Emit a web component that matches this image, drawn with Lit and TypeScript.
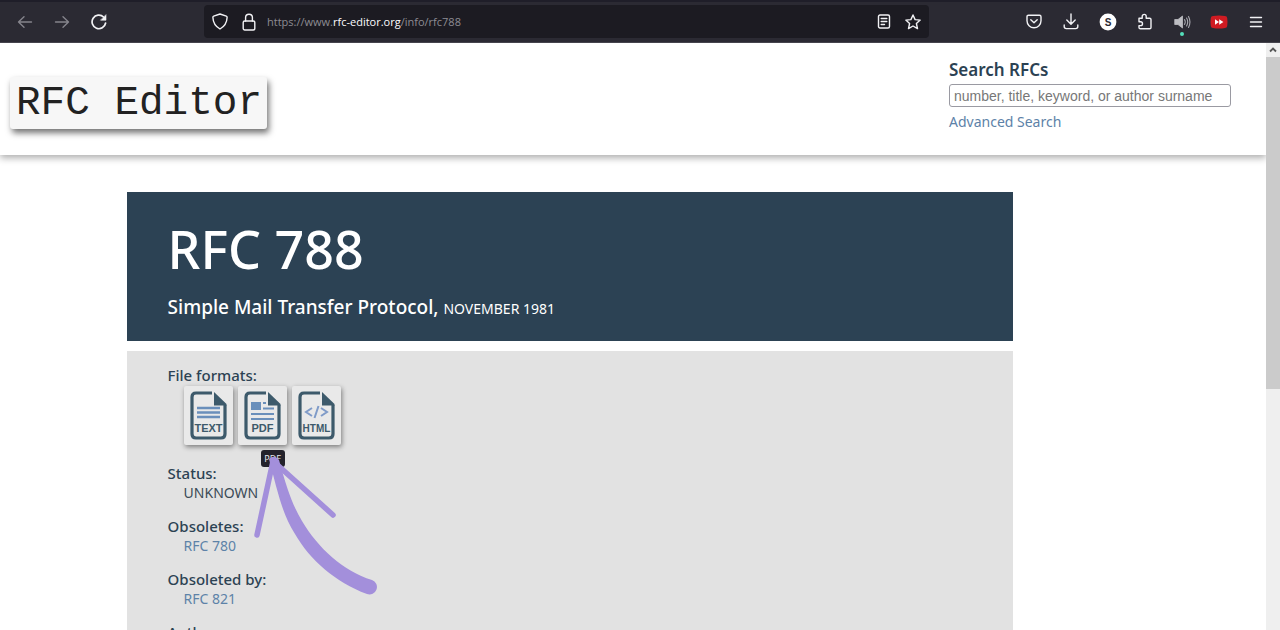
import { LitElement, html, svg, css } from "lit";
import { customElement } from "lit/decorators.js";

@customElement("browser-toolbar")
class BrowserToolbar extends LitElement {
  static styles = css`
    :host {
      display: block;
      font-family: "Open Sans", "Noto Sans", sans-serif;
    }
    .bar {
      display: flex;
      align-items: center;
      height: 43px;
      box-sizing: border-box;
      padding: 3px 12px 4px 13px;
      background: #2b2a33;
      border-top: 2px solid #1f1e29;
      border-bottom: 1px solid #45444d;
    }
    button {
      border: 0;
      background: none;
      padding: 0;
      width: 24px;
      height: 24px;
      color: #f2f2f5;
      position: relative;
    }
    svg {
      display: block;
      margin: 0 auto;
      fill: none;
      stroke: currentColor;
      stroke-width: 1.4;
      stroke-linecap: round;
      stroke-linejoin: round;
    }
    .nav {
      display: flex;
      gap: 13px;
      flex: 0 0 191px;
    }
    .dim {
      color: #85848c;
    }
    .url {
      flex: 0 1 725px;
      min-width: 0;
      height: 33px;
      box-sizing: border-box;
      display: flex;
      align-items: center;
      gap: 5px;
      padding: 0 4px;
      border-radius: 4px;
      background: #1c1b22;
    }
    .address {
      flex: 1;
      padding-left: 1px;
      font-size: 11px;
      line-height: 16px;
      color: #8d8c93;
      white-space: nowrap;
      overflow: hidden;
    }
    .address b {
      font-weight: 400;
      color: #fbfbfe;
    }
    .tools {
      flex: 1;
      display: flex;
      justify-content: flex-end;
      gap: 13px;
    }
    .dot {
      position: absolute;
      left: 10px;
      top: 22px;
      width: 4px;
      height: 4px;
      border-radius: 50%;
      background: #54dfbb;
    }
  `;

  render() {
    return html`
      <nav class="bar" aria-label="Browser">
        <div class="nav">
          <button class="dim" aria-label="Back">
            <svg width="16" height="16" viewBox="0 0 16 16"><path d="M14.5 8H1.5M7 2.8L1.5 8L7 13.2" /></svg>
          </button>
          <button class="dim" aria-label="Forward">
            <svg width="16" height="16" viewBox="0 0 16 16"><path d="M1.5 8H14.5M9 2.8L14.5 8L9 13.2" /></svg>
          </button>
          <button aria-label="Reload">
            <svg width="16" height="16" viewBox="0 0 16 16">
              <path d="M14.6 9A6.8 6.8 0 1 1 12.6 3" stroke-width="1.7" />
              <path d="M15 1V6.2H9.8Z" fill="currentColor" stroke-width="0.6" />
            </svg>
          </button>
        </div>
        <div class="url">
          <button aria-label="Tracking protection">
            <svg width="16" height="17" viewBox="0 0 16 17">
              <path d="M8 1L14.3 3.2Q15.2 3.5 15.1 4.5Q14.8 12.2 8 16Q1.2 12.2 .9 4.5Q.8 3.5 1.7 3.2Z" />
            </svg>
          </button>
          <button aria-label="Connection secure">
            <svg width="14" height="18" viewBox="0 0 14 18">
              <rect x="1.2" y="8" width="11.6" height="9" rx="1.5" />
              <path d="M3.6 8V4.6A3.4 3.4 0 0 1 10.4 4.6V8" />
            </svg>
          </button>
          <div class="address">https://www.<b>rfc-editor.org</b>/info/rfc788</div>
          <button aria-label="Reader view">
            <svg width="14" height="15" viewBox="0 0 14 15">
              <rect x="1.5" y="1" width="11" height="13" rx="1.5" />
              <path d="M4.2 4.5H9.8M4.2 7.5H9.8M4.2 10.5H7.5" />
            </svg>
          </button>
          <button aria-label="Bookmark">
            <svg width="16" height="16" viewBox="0 0 16 16">
              <path d="M8 1L10.1 5.6L15.2 6.1L11.4 9.5L12.5 14.6L8 12L3.5 14.6L4.6 9.5L.8 6.1L5.9 5.6Z" />
            </svg>
          </button>
        </div>
        <div class="tools">
          <button aria-label="Pocket">
            <svg width="16" height="15" viewBox="0 0 16 15">
              <path d="M2.5 1.2H13.5Q15 1.2 15 2.7V6.8A7 7 0 0 1 1 6.8V2.7Q1 1.2 2.5 1.2ZM4.8 5.7L8 8.8L11.2 5.7" />
            </svg>
          </button>
          <button aria-label="Downloads">
            <svg width="16" height="17" viewBox="0 0 16 17">
              <path d="M8 1V11M3.8 7L8 11.2L12.2 7M1.2 12V13.5Q1.2 15.6 3.3 15.6H12.7Q14.8 15.6 14.8 13.5V12" />
            </svg>
          </button>
          <button aria-label="Account">
            <svg width="18" height="18" viewBox="0 0 18 18">
              <circle cx="9" cy="9" r="8.4" fill="#fff" stroke="none" />
              <text x="9" y="12.5" text-anchor="middle" font-size="10" font-weight="700" fill="#2b2a33" stroke="none">S</text>
            </svg>
          </button>
          <button aria-label="Extensions">
            <svg width="16" height="17" viewBox="0 0 16 17">
              <path d="M2 5.2H5.2V3.4A2 2 0 0 1 9.2 3.4V5.2H12.6Q14 5.2 14 6.6V14.4Q14 15.8 12.6 15.8H3.4Q2 15.8 2 14.4V12.6H3.6A1.9 1.9 0 0 0 3.6 8.8H2Z" />
            </svg>
          </button>
          <button aria-label="Volume">
            <svg width="17" height="14" viewBox="0 0 17 14">
              <path d="M1 4.5H4L8.5 1V13L4 9.5H1Z" fill="#bdbdc2" stroke="#bdbdc2" stroke-width="0.8" />
              <path d="M10.5 4.6Q12 7 10.5 9.4M12.6 3Q14.8 7 12.6 11M14.5 1.6Q17.4 7 14.5 12.4" stroke="#a9a9b0" stroke-width="1.1" />
            </svg>
            <span class="dot"></span>
          </button>
          <button aria-label="Video speed">
            <svg width="18" height="14" viewBox="0 0 18 14">
              <path d="M3 1Q9 0 15 1Q17 1.2 17.2 3Q17.8 7 17.2 11Q17 12.8 15 13Q9 14 3 13Q1 12.8 .8 11Q.2 7 .8 3Q1 1.2 3 1Z" fill="#cf1b22" stroke="none" />
              <path d="M5 4.2L9 7L5 9.8ZM9.2 4.2L13.4 7L9.2 9.8Z" fill="#fff" stroke="none" />
            </svg>
          </button>
          <button aria-label="Menu">
            <svg width="14" height="12" viewBox="0 0 14 12"><path d="M1.5 1.5H12.5M1.5 6H12.5M1.5 10.5H12.5" /></svg>
          </button>
        </div>
      </nav>
    `;
  }
}

const page = svg`
  <path d="M22 2H6Q2 2 2 6V43Q2 47 6 47H31Q35 47 35 43V14" fill="none" stroke="#3d5a6b" stroke-width="3.2" />
  <path d="M24 1L36.5 13V14.5H24Z" fill="#3d5a6b" />
`;

const art = {
  TEXT: svg`<path d="M7 17H30M7 21.5H30M7 26H30" stroke="#6a8fbb" stroke-width="2.4" />`,
  PDF: svg`<path d="M19 12H22M19 17.5H30M7 23H30M7 28H30" stroke="#6a8fbb" stroke-width="2.2" /><path d="M7 11H17V19H7Z" fill="#6a8fbb" />`,
  HTML: svg`<path d="M14 17L8 21L14 25M23 17L29 21L23 25M20.5 15L16.5 27" fill="none" stroke="#7f9bc8" stroke-width="2" />`,
};

@customElement("app-root")
class AppRoot extends LitElement {
  static styles = css`
    :host {
      display: flex;
      flex-direction: column;
      height: 100vh;
      overflow: hidden;
      background: #fff;
      color: #2c4253;
      font-family: "Noto Sans", "Open Sans", sans-serif;
      font-size: 14px;
      line-height: 19px;
    }
    a {
      color: #5d82a8;
      text-decoration: none;
    }
    .view {
      flex: 1;
      min-height: 0;
      display: flex;
    }
    .site {
      flex: 1;
      min-width: 0;
      overflow: hidden;
    }
    .masthead {
      display: flex;
      justify-content: space-between;
      align-items: flex-start;
      height: 112px;
      box-sizing: border-box;
      padding: 16px 35px 0 10px;
      box-shadow: 0 3px 7px rgba(0, 0, 0, 0.32);
    }
    .logo {
      margin-top: 18px;
      padding: 0 5px 0 6px;
      border-radius: 3px;
      background: #f7f7f7;
      box-shadow: 2px 4px 6px rgba(0, 0, 0, 0.55);
      color: #222;
      font-family: "Liberation Mono", monospace;
      font-size: 41px;
      line-height: 52px;
      white-space: nowrap;
    }
    .search {
      display: flex;
      flex-direction: column;
      width: 282px;
    }
    .search label {
      font-size: 17px;
      font-weight: 600;
      line-height: 22px;
      margin-bottom: 3px;
    }
    .search input {
      box-sizing: border-box;
      height: 23px;
      margin-bottom: 5px;
      padding: 0 4px;
      border: 1px solid #9a9aa2;
      border-radius: 3px;
      background: #fff;
      font-family: "Liberation Sans", Arial, sans-serif;
      font-size: 14px;
    }
    .search input::placeholder {
      color: #777;
    }
    .content {
      width: 70%;
      margin: 37px 0 0 10%;
    }
    .hero {
      padding: 23px 41px 20px;
      background: #2c4254;
      color: #fff;
    }
    h1 {
      margin: 0 0 10px;
      font-size: 52px;
      font-weight: 500;
      line-height: 68px;
    }
    .subtitle {
      margin: 0;
      font-size: 19px;
      font-weight: 500;
      line-height: 28px;
    }
    .subtitle span {
      font-size: 14px;
      font-weight: 400;
      line-height: 14px;
      text-transform: uppercase;
    }
    .info {
      position: relative;
      margin: 10px 0 0;
      padding: 15px 41px;
      min-height: 400px;
      background: #e2e2e2;
    }
    dt {
      font-size: 15px;
      font-weight: 500;
    }
    dd {
      margin: 0 0 15px 16px;
    }
    .plain {
      color: #3a4a56;
    }
    .formats {
      display: flex;
      gap: 5px;
      margin: 1px 0 19px 16px;
    }
    .card {
      position: relative;
      width: 49px;
      height: 59px;
      display: grid;
      place-items: center;
      border-radius: 2px;
      background: #e9e9e9;
      box-shadow: 1px 2px 5px rgba(0, 0, 0, 0.45);
    }
    .card text {
      font-family: "Liberation Sans", sans-serif;
      font-weight: 700;
      font-size: 11px;
      fill: #3d5a6b;
    }
    .card .wide {
      font-size: 10px;
    }
    .tip {
      position: absolute;
      left: 23px;
      top: 64px;
      width: 24px;
      border-radius: 3px;
      background: #23222b;
      color: #e6e6ea;
      font-size: 9px;
      line-height: 17px;
      text-align: center;
    }
    .arrow {
      position: absolute;
      left: 120px;
      top: 99px;
      margin: 0;
      pointer-events: none;
    }
    .scroll {
      flex: 0 0 14px;
      background: #efefef;
    }
    .scroll svg {
      display: block;
    }
    .thumb {
      height: 332px;
      background: #cbcbcb;
    }
  `;

  private card(kind: "TEXT" | "PDF" | "HTML") {
    return html`<a class="card" href="#${kind}" aria-label=${kind}>
      <svg width="37" height="49" viewBox="0 0 37 49">
        ${page}${art[kind]}
        <text class=${kind === "HTML" ? "wide" : ""} x="18.5" y="41" text-anchor="middle">${kind}</text>
      </svg>
      ${kind === "PDF" ? html`<span class="tip">PDF</span>` : ""}
    </a>`;
  }

  render() {
    return html`
      <browser-toolbar></browser-toolbar>
      <div class="view">
        <div class="site">
          <header class="masthead">
            <div class="logo">RFC Editor</div>
            <form class="search">
              <label for="q">Search RFCs</label>
              <input id="q" type="text" placeholder="number, title, keyword, or author surname" />
              <a href="#advanced">Advanced Search</a>
            </form>
          </header>
          <main class="content">
            <div class="hero">
              <h1>RFC 788</h1>
              <p class="subtitle">Simple Mail Transfer Protocol, <span>November 1981</span></p>
            </div>
            <dl class="info">
              <dt>File formats:</dt>
              <dd class="formats">${this.card("TEXT")}${this.card("PDF")}${this.card("HTML")}</dd>
              <dt>Status:</dt>
              <dd class="plain">UNKNOWN</dd>
              <dt>Obsoletes:</dt>
              <dd><a href="#780">RFC 780</a></dd>
              <dt>Obsoleted by:</dt>
              <dd><a href="#821">RFC 821</a></dd>
              <dt>Author:</dt>
              <dd class="arrow" aria-hidden="true">
                <svg width="140" height="150" viewBox="0 0 140 150">
                  <path d="M10 85L26 11L86 65" fill="none" stroke="#a38fdb" stroke-width="5.5" stroke-linecap="round" stroke-linejoin="round" />
                  <path d="M22 9Q27 4 32 10C40 39 45 54 55 71C71 98 96 121 125 130A7 7 0 0 1 120 144C88 132 63 110 48 84C38 68 34 54 29 36Z" fill="#a38fdb" />
                </svg>
              </dd>
            </dl>
          </main>
        </div>
        <div class="scroll" aria-hidden="true">
          <svg width="14" height="14" viewBox="0 0 14 14">
            <path d="M4 8.5L7 5.5L10 8.5" fill="none" stroke="#555" stroke-width="1.8" />
          </svg>
          <div class="thumb"></div>
        </div>
      </div>
    `;
  }
}
